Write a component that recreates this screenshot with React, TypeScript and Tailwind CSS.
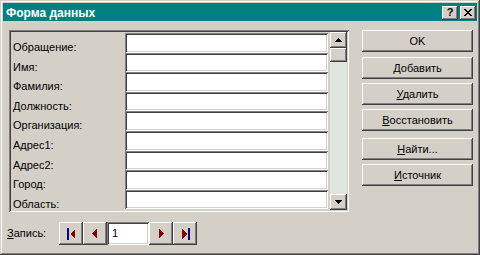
import React from 'react';

const raised =
  'shadow-[inset_-1px_-1px_#404040,inset_1px_1px_#ffffff,inset_-2px_-2px_#808080,inset_2px_2px_#d4d0c8]';
const sunken =
  'shadow-[inset_1px_1px_#808080,inset_-1px_-1px_#ffffff,inset_2px_2px_#404040,inset_-2px_-2px_#d4d0c8]';

const fields = [
  { label: 'Обращение:', h: 'h-[20px]' },
  { label: 'Имя:', h: 'h-[19px]' },
  { label: 'Фамилия:', h: 'h-[20px]' },
  { label: 'Должность:', h: 'h-[19px]' },
  { label: 'Организация:', h: 'h-[20px]' },
  { label: 'Адрес1:', h: 'h-[20px]' },
  { label: 'Адрес2:', h: 'h-[19px]' },
  { label: 'Город:', h: 'h-[20px]' },
  { label: 'Область:', h: 'h-[19px]' },
];

const Btn: React.FC<{ hot?: string; rest: string; className?: string }> = ({ hot, rest, className = '' }) => (
  <div className={`h-[22px] flex items-center justify-center bg-[#d4d0c8] ${raised} ${className}`}>
    <span className="text-[11px] leading-[13px] text-black">
      {hot && <span className="underline underline-offset-[1px]">{hot}</span>}
      {rest}
    </span>
  </div>
);

const NavBtn: React.FC<{ children: React.ReactNode }> = ({ children }) => (
  <div className={`w-[24px] h-[23px] flex items-center justify-center bg-[#d4d0c8] ${raised}`}>{children}</div>
);

export default function App() {
  return (
    <div
      className="w-[480px] h-[255px] bg-[#d4d0c8] p-[3px] flex flex-col shadow-[inset_-1px_-1px_#404040,inset_1px_1px_#d4d0c8,inset_-2px_-2px_#808080,inset_2px_2px_#ffffff]"
      style={{ fontFamily: '"Liberation Sans", Arial, sans-serif' }}
    >
      {/* title bar */}
      <div className="h-[18px] bg-[#008080] flex items-center justify-between pl-[3px] pr-[1px]">
        <span className="text-white font-bold text-[12px] leading-[14px] pt-[1px]">Форма данных</span>
        <div className="flex gap-[1px] pt-[1px]">
          <div className={`w-[16px] h-[14px] bg-[#d4d0c8] flex items-center justify-center ${raised}`}>
            <span className="text-[11px] font-bold leading-[11px] text-black">?</span>
          </div>
          <div className={`w-[16px] h-[14px] ml-[1px] bg-[#d4d0c8] flex items-center justify-center ${raised}`}>
            <svg width="8" height="7" viewBox="0 0 8 7" shapeRendering="crispEdges">
              <path d="M0 0h2v1h-2zM6 0h2v1h-2zM1 1h2v1h-2zM5 1h2v1h-2zM2 2h4v1h-4zM3 3h2v1h-2zM2 4h4v1h-4zM1 5h2v1h-2zM5 5h2v1h-2zM0 6h2v1h-2zM6 6h2v1h-2z" fill="#000" />
            </svg>
          </div>
        </div>
      </div>

      <div className="flex mt-[9px] ml-[6px]">
        {/* fields panel */}
        <div className={`w-[340px] h-[182px] p-[2px] flex ${sunken}`}>
          <div className="w-[319px] pt-[1px] flex flex-col">
            {fields.map((f) => (
              <div key={f.label} className={`flex ${f.h}`}>
                <div className="w-[114px] pl-[2px] pt-[8px] text-[11px] leading-[13px] text-black">{f.label}</div>
                <div className={`w-[203px] h-full mb-[1px] bg-white ${sunken}`} />
              </div>
            ))}
          </div>
          <div className="w-[17px] flex flex-col bg-[#e0e5df]">
            <div className={`h-[16px] bg-[#d4d0c8] flex items-center justify-center ${raised}`}>
              <svg width="7" height="4" viewBox="0 0 7 4" shapeRendering="crispEdges">
                <path d="M3 0h1v1h1v1h1v1h1v1h-7v-1h1v-1h1v-1h1z" fill="#000" />
              </svg>
            </div>
            <div className={`h-[14px] bg-[#d4d0c8] ${raised}`} />
            <div className="flex-1" />
            <div className={`h-[16px] bg-[#d4d0c8] flex items-center justify-center ${raised}`}>
              <svg width="7" height="4" viewBox="0 0 7 4" shapeRendering="crispEdges">
                <path d="M0 0h7v1h-1v1h-1v1h-1v1h-1v-1h-1v-1h-1v-1h-1z" fill="#000" />
              </svg>
            </div>
          </div>
        </div>

        {/* buttons */}
        <div className="ml-[13px] w-[111px] flex flex-col">
          <Btn rest="OK" />
          <Btn hot="Д" rest="обавить" className="mt-[5px]" />
          <Btn hot="У" rest="далить" className="mt-[4px]" />
          <Btn hot="В" rest="осстановить" className="mt-[4px]" />
          <Btn hot="Н" rest="айти..." className="mt-[7px]" />
          <Btn hot="И" rest="сточник" className="mt-[4px]" />
        </div>
      </div>

      {/* record navigator */}
      <div className="flex items-center mt-[10px] ml-[4px]">
        <span className="w-[52px] text-[11px] leading-[13px] text-black">
          <span className="underline underline-offset-[1px]">З</span>апись:
        </span>
        <NavBtn>
          <svg width="9" height="12" viewBox="0 0 9 12" shapeRendering="crispEdges">
            <rect x="0" y="0" width="2" height="12" fill="#000080" />
            <path d="M3 6L8 1v10z" fill="#800000" />
          </svg>
        </NavBtn>
        <NavBtn>
          <svg width="6" height="11" viewBox="0 0 6 11" shapeRendering="crispEdges">
            <path d="M0 5.5L5 0.5v10z" fill="#800000" />
          </svg>
        </NavBtn>
        <div className={`w-[42px] h-[23px] bg-white pl-[5px] flex items-center ${sunken}`}>
          <span className="text-[11px] leading-[13px] text-black">1</span>
        </div>
        <NavBtn>
          <svg width="6" height="11" viewBox="0 0 6 11" shapeRendering="crispEdges">
            <path d="M6 5.5L1 0.5v10z" fill="#800000" />
          </svg>
        </NavBtn>
        <NavBtn>
          <svg width="9" height="12" viewBox="0 0 9 12" shapeRendering="crispEdges">
            <path d="M6 6L1 1v10z" fill="#800000" />
            <rect x="7" y="0" width="2" height="12" fill="#000080" />
          </svg>
        </NavBtn>
      </div>
    </div>
  );
}
